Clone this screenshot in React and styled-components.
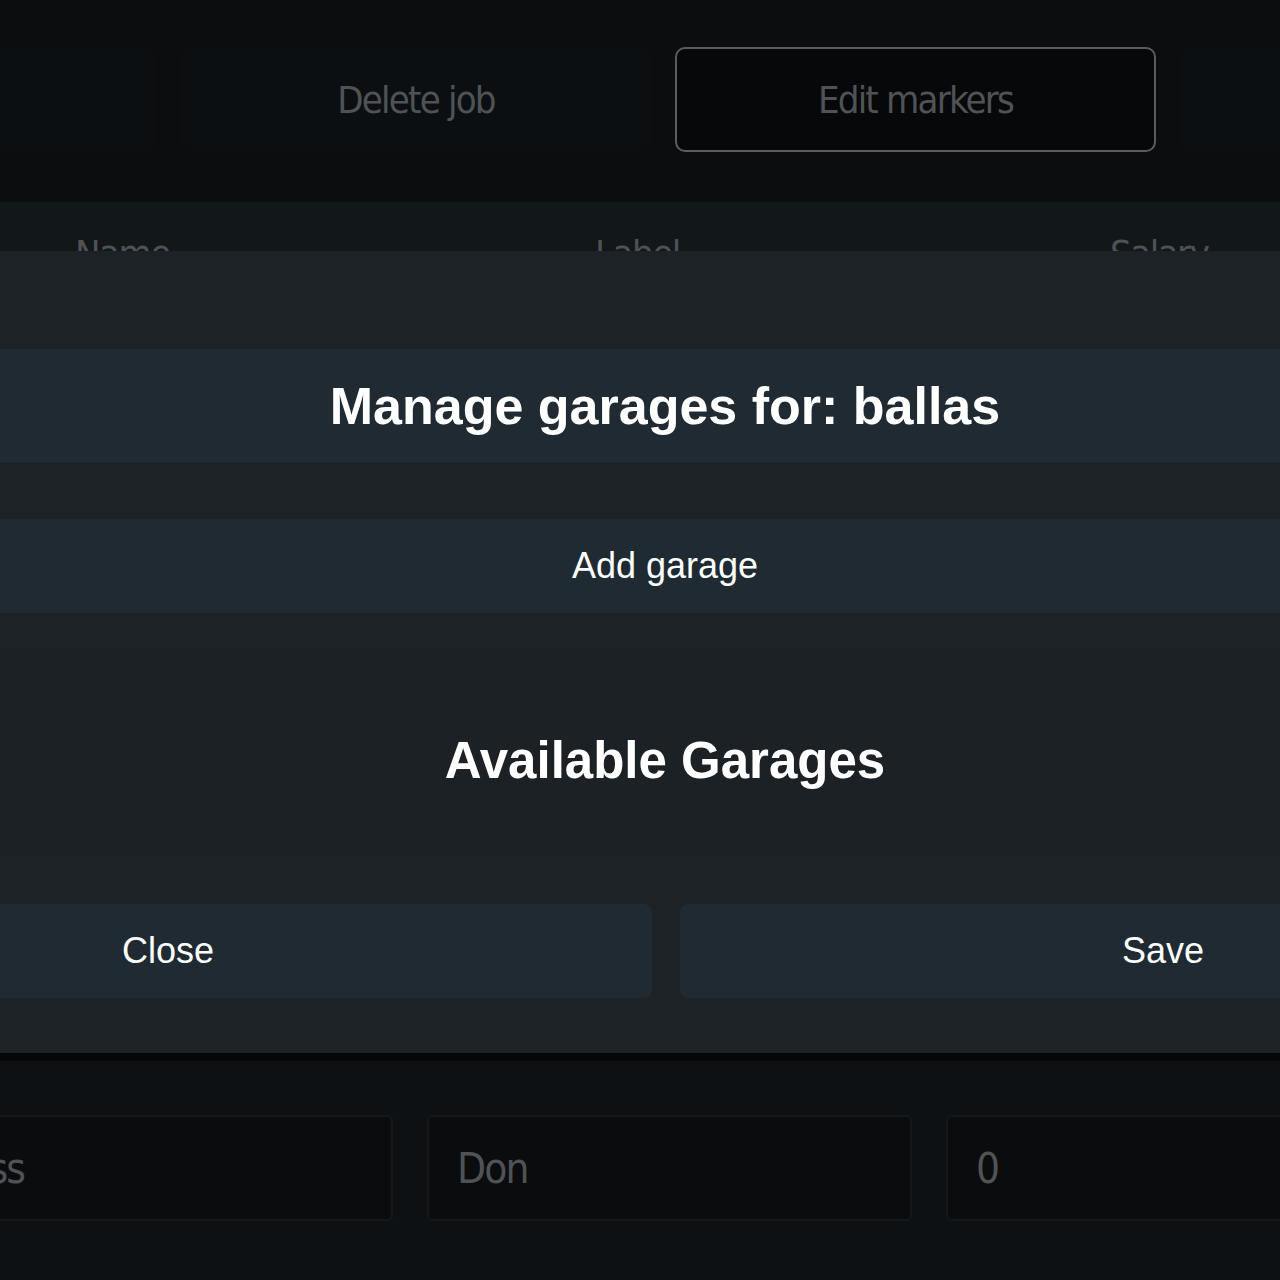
import React from "react";
import styled, { createGlobalStyle } from "styled-components";

const Global = createGlobalStyle`
  html, body { margin: 0; padding: 0; background: #0b0d0f; }
  #root { width: 1280px; height: 1280px; overflow: hidden; position: relative; }
`;

const Page = styled.div`
  width: 1280px;
  height: 1280px;
  background: #0b0d0f;
  font-family: "DejaVu Sans", sans-serif;
  font-stretch: condensed;
  position: relative;
  overflow: hidden;
`;

const Toolbar = styled.div`
  display: flex;
  gap: 24px;
  padding: 47px 0 0;
  margin-left: -307px;
  height: 202px;
  box-sizing: border-box;
`;

const ToolButton = styled.div`
  flex: 0 0 ${(p) => p.$w}px;
  height: 105px;
  box-sizing: border-box;
  border-radius: 10px;
  background: ${(p) => (p.$active ? "#070809" : "#0c0f11")};
  border: 2px solid ${(p) => (p.$active ? "#5a5d60" : "transparent")};
  display: flex;
  align-items: center;
  justify-content: center;
  color: #505356;
  font-size: 38px;
  letter-spacing: -1.8px;
`;

const Table = styled.div`
  background: #12171a;
  height: 851px;
  display: grid;
  grid-template-columns: 75px 520px 515px 1fr;
  align-content: start;
  color: #4f5255;
  font-size: 38px;
  letter-spacing: -1.5px;
`;

const HeadCell = styled.div`
  padding-top: 30px;
`;

const Bottom = styled.div`
  border-top: 8px solid #060708;
  background: #0e1114;
  display: flex;
  gap: 34px;
  padding: 54px 0 0;
  margin-left: -87px;
  height: 300px;
  box-sizing: border-box;
`;

const Input = styled.div`
  flex: 0 0 ${(p) => p.$w}px;
  height: 106px;
  box-sizing: border-box;
  background: #0a0c0e;
  border: 2px solid #15181b;
  border-radius: 6px;
  display: flex;
  align-items: center;
  padding-left: 28px;
  color: #505356;
  font-size: 42px;
  letter-spacing: -1.8px;
`;

const Modal = styled.div`
  position: absolute;
  left: -40px;
  right: -40px;
  top: 251px;
  height: 802px;
  background: #1c2226;
  font-family: "Liberation Sans", Arial, sans-serif;
  color: #fff;
  display: flex;
  flex-direction: column;
`;

const TitleBand = styled.div`
  margin-top: 98px;
  height: 114px;
  background: #1f2a32;
  display: flex;
  align-items: center;
  justify-content: center;
  font-size: 52px;
  font-weight: 700;
  padding-left: 50px;
`;

const AddButton = styled.div`
  margin-top: 56px;
  height: 94px;
  background: #1f2a32;
  display: flex;
  align-items: center;
  justify-content: center;
  font-size: 36px;
  padding-left: 50px;
`;

const Section = styled.div`
  margin-top: 42px;
  height: 194px;
  box-sizing: border-box;
  background: #1b2124;
  display: flex;
  align-items: center;
  justify-content: center;
  font-size: 51px;
  font-weight: 700;
  padding: 16px 0 0 50px;
`;

const Footer = styled.div`
  margin-top: 55px;
  display: flex;
  gap: 28px;
`;

const FootButton = styled.div`
  flex: 0 0 ${(p) => p.$w}px;
  height: 94px;
  background: #1f2a32;
  border-radius: 8px;
  display: flex;
  align-items: center;
  font-size: 36px;
  padding-left: ${(p) => p.$pl}px;
  box-sizing: border-box;
`;

export default function App() {
  return (
    <Page>
      <Global />
      <Toolbar>
        <ToolButton $w={464} />
        <ToolButton $w={470}>Delete job</ToolButton>
        <ToolButton $w={481} $active>Edit markers</ToolButton>
        <ToolButton $w={470} />
      </Toolbar>
      <Table>
        <div />
        <HeadCell>Name</HeadCell>
        <HeadCell>Label</HeadCell>
        <HeadCell>Salary</HeadCell>
      </Table>
      <Bottom>
        <Input $w={480}>Boss</Input>
        <Input $w={485}>Don</Input>
        <Input $w={400}>0</Input>
      </Bottom>
      <Modal>
        <TitleBand>Manage garages for: ballas</TitleBand>
        <AddButton>Add garage</AddButton>
        <Section>Available Garages</Section>
        <Footer>
          <FootButton $w={692} $pl={162}>Close</FootButton>
          <FootButton $w={970} $pl={442}>Save</FootButton>
        </Footer>
      </Modal>
    </Page>
  );
}
